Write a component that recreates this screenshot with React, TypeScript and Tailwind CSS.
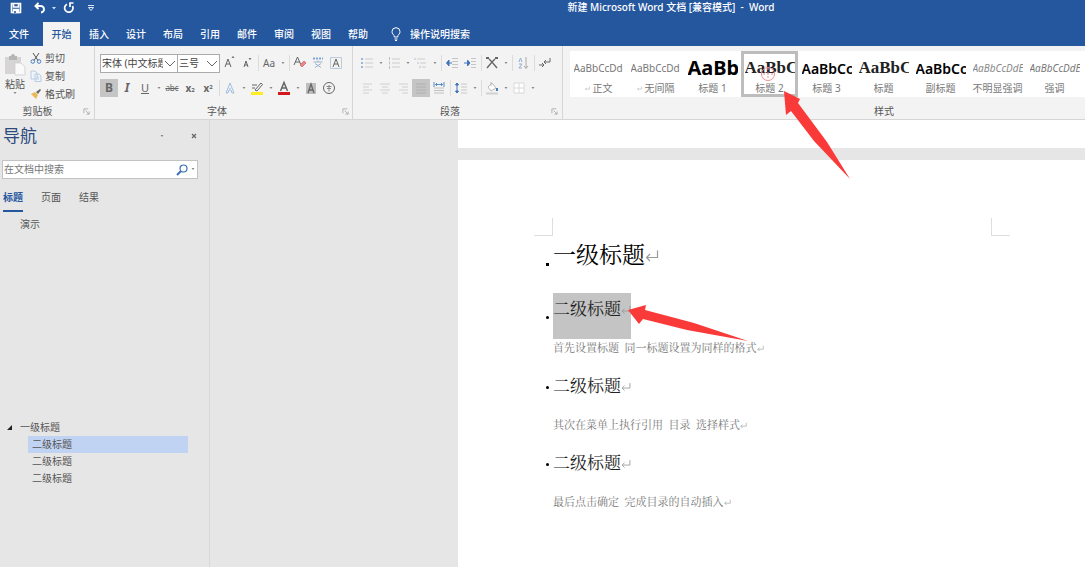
import type { ReactNode } from 'react';

const MENU = ['插入', '设计', '布局', '引用', '邮件', '审阅', '视图', '帮助'];

const STYLES = [
    { name: '正文', mark: true, sample: 'AaBbCcDd', look: 'text-[10px] text-[#777]' },
    { name: '无间隔', mark: true, sample: 'AaBbCcDd', look: 'text-[10px] text-[#777]' },
    { name: '标题 1', sample: 'AaBb', look: 'text-[20px] font-bold text-black' },
    { name: '标题 2', sample: 'AaBbC', look: "text-[17px] font-bold text-[#222] font-['Liberation_Serif',serif]", active: true },
    { name: '标题 3', sample: 'AaBbCc', look: 'text-[14px] font-semibold text-black' },
    { name: '标题', sample: 'AaBbC', look: "text-[17px] font-bold text-[#222] font-['Liberation_Serif',serif]" },
    { name: '副标题', sample: 'AaBbCc', look: 'text-[14px] font-semibold text-black' },
    { name: '不明显强调', sample: 'AaBbCcDdE', look: 'text-[10px] italic text-[#888]' },
    { name: '强调', sample: 'AaBbCcDdE', look: 'text-[10px] italic text-[#777]' },
];

// Words are separated by half-width (en) spaces, as in the document font
const SECTIONS = [
    { title: '二级标题', text: '首先设置标题\u2002同一标题设置为同样的格式', selected: true },
    { title: '二级标题', text: '其次在菜单上执行引用\u2002目录\u2002选择样式' },
    { title: '二级标题', text: '最后点击确定\u2002完成目录的自动插入' },
];

function Tool({ label, active, children }: { label: string; active?: boolean; children: ReactNode }) {
    return (
        <button aria-label={label} className={`flex h-[18px] w-[18px] shrink-0 items-center justify-center text-[#666] ${active ? 'bg-[#c5c5c5]' : ''}`}>
            {children}
        </button>
    );
}

function Svg({ children }: { children: ReactNode }) {
    return (
        <svg viewBox="0 0 16 16" className="h-4 w-4" fill="none" stroke="currentColor" strokeWidth="1">
            {children}
        </svg>
    );
}

function Caret() {
    return (
        <span className="flex w-[9px] shrink-0 items-center justify-center">
            <svg viewBox="0 0 4 3" className="h-[3px] w-1" fill="#888"><path d="M.5 0h3L2 2z" /></svg>
        </span>
    );
}

function Sep() {
    return (
        <span className="flex w-1 shrink-0 justify-center">
            <span className="h-4 w-px bg-[#dcdcdc]" />
        </span>
    );
}

function Launcher() {
    return (
        <svg viewBox="0 0 8 8" className="h-[7px] w-[7px]" fill="none" stroke="#aaa"><path d="M1 6V1h5M3 3l4 4M7 4v3H4" /></svg>
    );
}

function Group({ title, className, children }: { title: string; className: string; children: ReactNode }) {
    return (
        <section className={`relative flex flex-col justify-between pt-2 ${className}`}>
            {children}
            <div className="flex h-[15px] items-center justify-center text-[10px] text-[#555]">{title}</div>
        </section>
    );
}

function Picker({ label, value, className }: { label: string; value: string; className: string }) {
    return (
        <span className={`relative h-[19px] shrink-0 border border-[#ababab] bg-white ${className}`}>
            <select aria-label={label} className="block h-full w-full appearance-none pl-px text-[10px] text-[#444] outline-none">
                <option>{value}</option>
            </select>
            <svg viewBox="0 0 14 17" className="pointer-events-none absolute top-0 right-0 h-[17px] w-[14px] bg-white" fill="none" stroke="#666"><path d="M2 6l5 5 5-5" /></svg>
        </span>
    );
}

function Return({ className }: { className: string }) {
    return (
        <svg viewBox="0 0 14 14" className={className} fill="none" stroke="#999" strokeWidth="1.200"><path d="M12.500 1.500V8.500H1.500M5 5L1.500 8.500 5 12" /></svg>
    );
}

function Header() {
    return (
        <header className="bg-[#25579e] text-[10px] text-white">
            <div className="relative flex h-[22px] items-start pt-[2px] pl-[10px]">
                <button aria-label="保存" className="flex w-3 justify-center">
                    <svg viewBox="0 0 12 12" className="h-3 w-3" fill="none" stroke="white" strokeWidth="1.600"><path d="M1.500 1.500h9v9h-9zM3.500 1.500v3.500h5V1.500" /><path d="M3.500 7.500h5v3h-5z" fill="white" /><path d="M5 9v2" stroke="#25579e" /></svg>
                </button>
                <button aria-label="撤消" className="ml-3 flex items-center">
                    <svg viewBox="0 0 12 12" className="h-3 w-3" fill="none" stroke="white" strokeWidth="1.900"><path d="M4.500 1L1.500 4l3 3M2 4h4.500a3.200 3.200 0 0 1 .5 6.500" /></svg>
                    <svg viewBox="0 0 4 3" className="ml-[6px] h-[3px] w-1" fill="#cfe0f5"><path d="M0 0h4L2 2.500z" /></svg>
                </button>
                <button aria-label="重复" className="ml-[7px]">
                    <svg viewBox="0 0 12 12" className="h-3 w-3" fill="none" stroke="white" strokeWidth="1.700"><path d="M4 2.200A4.200 4.200 0 1 0 9.500 4" /><path d="M10.500 1H7v4" /></svg>
                </button>
                <button aria-label="自定义快速访问工具栏" className="mt-[3px] ml-3">
                    <svg viewBox="0 0 8 7" className="h-[7px] w-2" fill="none" stroke="#dbe6f5"><path d="M1 .5h6M1.500 2.500h5L4 5.500z" /></svg>
                </button>
                <h1 className="absolute inset-x-0 top-0 pl-[257px] text-center text-[10px] leading-[15px] font-medium">新建 Microsoft Word 文档 [兼容模式] &nbsp;-&nbsp; Word</h1>
            </div>
            <nav className="flex h-6 items-stretch font-medium">
                <button className="w-[43px] pr-[5px]">文件</button>
                <button className="w-[37px] bg-[#f3f3f3] text-[#25579e]">开始</button>
                <div className="flex pl-[9px]">
                    {MENU.map((m) => <button key={m} className="mr-[17px] w-5 whitespace-nowrap">{m}</button>)}
                </div>
                <button className="ml-[6px] flex items-center gap-[9px]">
                    <svg viewBox="0 0 10 14" className="h-[14px] w-[10px]" fill="none" stroke="white"><path d="M3.200 10V8.500C2 7.500 1 6.500 1 4.700a4 4 0 0 1 8 0C9 6.500 8 7.500 6.800 8.500V10zM3.500 12h3M4 13.500h2" /></svg>
                    操作说明搜索
                </button>
            </nav>
        </header>
    );
}

function Clipboard() {
    return (
        <Group title="剪贴板" className="w-[94px] pr-[19px]">
            <div className="flex text-[10px] leading-[18px] text-[#555]">
                <button className="flex w-[38px] flex-col items-center">
                    <svg viewBox="0 0 22 22" className="h-[22px] w-[22px]"><path d="M1 3h16v17H1z" fill="#d6d4d4" /><path d="M5 2h2a2 2 0 0 1 4 0h2v4H5z" fill="#b5b5b5" /><path d="M11 9h6l4 4v8H11z" fill="#fafafa" stroke="#d5d5d5" /></svg>
                    <span className="leading-4">粘贴</span>
                    <Caret />
                </button>
                <div className="-mt-[5px] flex flex-col whitespace-nowrap">
                    <button className="flex items-center gap-[3px]">
                        <svg viewBox="0 0 12 12" className="h-3 w-3" fill="none" stroke="#555"><path d="M3 1l5 7.500M9 1L4 8.500" /><g stroke="#4a7ebb"><circle cx="2.800" cy="9.500" r="1.800" /><circle cx="9" cy="9.500" r="1.800" /></g></svg>
                        剪切
                    </button>
                    <button className="flex items-center gap-[3px]">
                        <svg viewBox="0 0 12 12" className="h-3 w-3" fill="#eef4fb" stroke="#b9cce2"><path d="M1 1h4l2 2v6H1zM5 4h4l2 2v5.500H5zM7 7h2M7 9h2" /></svg>
                        复制
                    </button>
                    <button className="flex items-center gap-[3px]">
                        <svg viewBox="0 0 12 12" className="h-3 w-3"><path d="M1 6l4-2 3 3-2 4z" fill="#edb85a" /><path d="M6 4l4-3 1 1-3 4z" fill="#666" /></svg>
                        格式刷
                    </button>
                </div>
            </div>
            <span className="absolute right-1 bottom-1"><Launcher /></span>
        </Group>
    );
}

function FontGroup() {
    return (
        <Group title="字体" className="w-[258px] border-l border-[#d5d5d5] pr-[18px] pl-[5px]">
            <div className="flex flex-col gap-[7px]">
                <div className="flex h-[18px] items-center">
                    <Picker label="字体" value="宋体 (中文标题" className="w-[78px]" />
                    <Picker label="字号" value="三号" className="-ml-px w-[43px]" />
                    <Tool label="增大字号"><Svg><path d="M4 12l3-8 3 8M5 9h4M11 3l1-1.500L13 3" /></Svg></Tool>
                    <Tool label="减小字号"><Svg><path d="M5 12l2-6 2 6M5.500 10h3M10 3l1 1.500L12 3" /></Svg></Tool>
                    <Sep />
                    <Tool label="更改大小写"><span className="text-[10px]">Aa</span></Tool>
                    <Caret />
                    <Sep />
                    <Tool label="清除格式"><Svg><path d="M2 10l3.500-8L9 10M3 7h5" /><path d="M8 10l4-4 2 2-4 4z" fill="#e58a8a" stroke="#d77" /></Svg></Tool>
                    <Tool label="拼音指南"><Svg><path d="M3 3.500h10" stroke="#7da6da" strokeDasharray="2 1" strokeWidth="2" /><path d="M3.500 7h9M8 5.500V7M5 8.500l6 4M11 8.500l-6 4" stroke="#9bb3d2" /></Svg></Tool>
                    <Tool label="字符边框"><Svg><path d="M2.500 2.500h11v11h-11z" stroke="#bccbdc" /><path d="M5 12l3-8 3 8M6 9h4" /></Svg></Tool>
                </div>
                <div className="flex h-[18px] items-center">
                    <Tool label="加粗" active><span className="text-xs font-bold">B</span></Tool>
                    <Tool label="倾斜"><span className="text-xs font-bold italic">I</span></Tool>
                    <Tool label="下划线"><span className="text-[11px] underline">U</span></Tool>
                    <Caret />
                    <Tool label="删除线"><span className="text-[8px] line-through">abc</span></Tool>
                    <Tool label="下标"><span className="text-[10px] font-bold">x<span className="text-[6px]">2</span></span></Tool>
                    <Tool label="上标"><span className="text-[10px] font-bold">x<sup className="text-[6px]">2</sup></span></Tool>
                    <Sep />
                    <Tool label="文本效果"><Svg><path d="M4 13L8 3l4 10h-2l-1-3H7l-1 3zM7.300 8.500h1.400" stroke="#9fc0e4" /></Svg></Tool>
                    <Caret />
                    <Tool label="突出显示"><Svg><path d="M2 12h12v3H2z" fill="#ffed20" stroke="none" /><path d="M6 10l6-7 1.500 1.500L8 11zM3 5h5M3 8h3" /></Svg></Tool>
                    <Caret />
                    <Tool label="字体颜色"><Svg><path d="M2 12h12v3H2z" fill="#d4171d" stroke="none" /><path d="M4.500 11L8 2.500l3.500 8.500M5.500 8h5" strokeWidth="1.500" /></Svg></Tool>
                    <Caret />
                    <Tool label="字符底纹"><Svg><path d="M3 3h10v11H3z" fill="#bdbdbd" stroke="none" /><path d="M5 13l3-9 3 9M6 10h4" strokeWidth="1.300" /></Svg></Tool>
                    <Tool label="带圈字符"><Svg><circle cx="8" cy="8" r="5.500" /><path d="M5.500 6.500h5M8 5v6.500M6 8.500h4" stroke="#888" /></Svg></Tool>
                </div>
            </div>
            <span className="absolute right-[3px] bottom-1"><Launcher /></span>
        </Group>
    );
}

function ParagraphGroup() {
    return (
        <Group title="段落" className="w-[210px] border-l border-[#d5d5d5] pr-5 pl-[5px]">
            <div className="flex flex-col gap-[7px]">
                <div className="flex h-[18px] items-center">
                    <Tool label="项目符号"><Svg><path d="M6 4h8M6 8h8M6 12h8" stroke="#ccc" /><path d="M2 4h2M2 8h2M2 12h2" stroke="#9ab6d8" strokeWidth="2" /></Svg></Tool>
                    <Caret />
                    <Tool label="编号"><Svg><path d="M6 4h8M6 8h8M6 12h8" stroke="#ccc" /><path d="M3.500 2v3M3.500 6.500v3M3.500 11v3" stroke="#bbc" /></Svg></Tool>
                    <Caret />
                    <Tool label="多级列表"><Svg><path d="M4 4h8M7 8h6M9 12h4" stroke="#ccc" /><path d="M1 4h2M4 8h2M6 12h2" stroke="#aac2de" /></Svg></Tool>
                    <Caret />
                    <Sep />
                    <Tool label="减少缩进量"><Svg><path d="M8 3.500h6M8 6.500h6M8 9.500h6M8 12.500h6" stroke="#c5c5c5" /><path d="M8 8H3M5 5L2.500 8 5 11z" fill="#3f74b8" stroke="#3f74b8" /></Svg></Tool>
                    <Tool label="增加缩进量"><Svg><path d="M9 3.500h5M9 6.500h5M9 9.500h5M9 12.500h5" stroke="#c5c5c5" /><path d="M2 8h5M5.500 5L8 8l-2.500 3z" fill="#3f74b8" stroke="#3f74b8" /></Svg></Tool>
                    <Sep />
                    <Tool label="中文版式"><Svg><path d="M3 13l5-6 5 6M5 4l3 3 3-3" strokeWidth="1.400" /><path d="M2 3h3M11 3h3" strokeWidth="2" /></Svg></Tool>
                    <Caret />
                    <Sep />
                    <Tool label="排序"><Svg><path d="M4 7l1.500-4L7 7M4 9h3l-3 4h3" stroke="#8fadd3" /><path d="M11 2v11M9 11l2 2.500 2-2.500" stroke="#aaa" /></Svg></Tool>
                    <Sep />
                    <Tool label="显示编辑标记"><Svg><path d="M13 3v4H7M9 5L7 7l2 2M2 10h5M5 8l2 2-2 2" /></Svg></Tool>
                </div>
                <div className="flex h-[18px] items-center">
                    <Tool label="左对齐"><Svg><path d="M4 4h9M4 7h6M4 10h9M4 13h6" stroke="#d0d0d0" /></Svg></Tool>
                    <Tool label="居中"><Svg><path d="M3 4h10M5 7h6M3 10h10M5 13h6" stroke="#d0d0d0" /></Svg></Tool>
                    <Tool label="右对齐"><Svg><path d="M4 4h9M7 7h6M4 10h9M7 13h6" stroke="#d0d0d0" /></Svg></Tool>
                    <Tool label="两端对齐" active><Svg><path d="M3 4h10M3 7h10M3 10h10M3 13h10" stroke="#b0b0b0" /></Svg></Tool>
                    <Tool label="分散对齐"><Svg><path d="M3 8h10M3 10.500h10M3 13h10" stroke="#c0c0c0" /><path d="M3 2v5M13 2v5M4 4.500h8M6 3L4.500 4.500 6 6M10 3l1.500 1.500L10 6" stroke="#5b8bc4" /></Svg></Tool>
                    <Sep />
                    <Tool label="行距"><Svg><path d="M8 4h6M8 7h6M8 10h6M8 13h6" stroke="#cacaca" /><path d="M4 3v10M2.500 5L4 3l1.500 2zM2.500 11L4 13l1.500-2z" fill="#3f74b8" stroke="#3f74b8" /></Svg></Tool>
                    <Caret />
                    <Sep />
                    <Tool label="底纹"><Svg><path d="M2 13.500h12" stroke="#d0d0d0" strokeWidth="2" /><path d="M4 7l4-4 4 5-5 3zM7 2v4" stroke="#bbb" fill="white" /><path d="M13 8v3" stroke="#4b7dbd" strokeWidth="2" /></Svg></Tool>
                    <Caret />
                    <Tool label="边框"><Svg><path d="M3 3h10v10H3zM8 3v10M3 8h10" stroke="#d8d8d8" fill="white" /></Svg></Tool>
                    <Caret />
                </div>
            </div>
            <span className="absolute right-1 bottom-1"><Launcher /></span>
        </Group>
    );
}

function StylesGroup() {
    return (
        <section className="flex min-w-0 flex-1 flex-col justify-between overflow-hidden border-l border-[#d5d5d5] pt-[5px] pl-[7px]">
            <div className="flex h-[46px] bg-white">
                {STYLES.map((s) => (
                    <button key={s.name} className={`flex w-[57px] shrink-0 flex-col items-center whitespace-nowrap ${s.active ? 'relative outline-3 -outline-offset-3 outline-[#bdbdbd]' : ''}`}>
                        <span className={`flex h-[30px] w-[50px] items-center overflow-hidden pt-1 ${s.look}`}>{s.sample}</span>
                        <span className="flex items-center gap-[3px] text-[10px] leading-[14px] text-[#777]">
                            {s.mark && <Return className="h-[5px] w-[5px]" />}
                            {s.name}
                        </span>
                        {s.active && (
                            <svg viewBox="0 0 16 16" className="absolute top-[15px] left-[19px] h-4 w-4" fill="none" stroke="#ef8d8d"><circle cx="8" cy="8" r="6.500" /><path d="M8 2v12M3 8h10" strokeDasharray="2 2" /></svg>
                        )}
                    </button>
                ))}
            </div>
            <div className="flex h-[15px] items-center justify-center pl-[113px] text-[10px] text-[#555]">样式</div>
        </section>
    );
}

function Navigation() {
    return (
        <aside className="w-[210px] shrink-0 border-r border-[#d8d8d8] text-[10px] text-[#555]">
            <div className="flex h-10 items-center pb-2 pl-[3px]">
                <h2 className="flex-1 text-[17px] text-[#2b4a7d]">导航</h2>
                <Caret />
                <button aria-label="关闭" className="mr-[11px] ml-6 flex w-2 justify-center">
                    <svg viewBox="0 0 6 6" className="h-[6px] w-[6px]" stroke="#666" strokeWidth="1.200"><path d="M1 1l4 4M5 1L1 5" /></svg>
                </button>
            </div>
            <div className="mr-[11px] ml-[2px] flex h-[19px] items-center border border-[#c3c3c3] bg-white">
                <input aria-label="在文档中搜索" placeholder="在文档中搜索" className="min-w-0 flex-1 pl-px outline-none placeholder:text-[#777]" />
                <svg viewBox="0 0 12 12" className="h-3 w-3" fill="none" stroke="#3c70b0" strokeWidth="1.200"><circle cx="7.500" cy="4.500" r="3.500" /><path d="M5 7L1 11" strokeWidth="2" /></svg>
                <Caret />
            </div>
            <div className="mt-[10px] flex gap-[18px] pl-[3px]">
                <button className="h-[23px] w-5 border-b-2 border-[#25579e] pb-1 font-bold whitespace-nowrap text-[#25579e]">标题</button>
                <button className="h-[23px] w-5 pb-[6px] whitespace-nowrap">页面</button>
                <button className="h-[23px] w-5 pb-[6px] whitespace-nowrap">结果</button>
            </div>
            <div className="mt-1 pl-5 leading-[17px]">演示</div>
            <ul className="mt-[186px] mr-[21px] leading-[17px]">
                <li className="flex items-center pl-[7px]">
                    <svg viewBox="0 0 5 5" className="mr-2 h-[5px] w-[5px]"><path d="M5 0v5H0z" fill="#222" /></svg>
                    一级标题
                </li>
                {SECTIONS.map((s, i) => (
                    <li key={i} className={`ml-7 pl-1 ${s.selected ? 'bg-[#c1d3f3]' : ''}`}>{s.title}</li>
                ))}
            </ul>
        </aside>
    );
}

function Document() {
    return (
        <main className="flex min-w-0 flex-1 flex-col gap-3 pl-[248px]">
            <div className="h-7 shrink-0 bg-white" />
            <article className="flex-1 bg-white pt-[58px] pb-8 pl-[76px] font-['Liberation_Serif','Noto_Serif_CJK_SC','Noto_Sans_CJK_SC',serif]">
                <div className="flex h-[18px] w-[476px] justify-between">
                    <span className="w-[19px] border-r border-b border-[#dedede]" />
                    <span className="w-[19px] border-b border-l border-[#dedede]" />
                </div>
                <div className="mb-[17px] flex h-10 items-center">
                    <span className="mt-4 mr-1 ml-3 h-[3px] w-[3px] bg-black" />
                    <h1 className="text-[23px] text-black">一级标题</h1>
                    <Return className="h-[14px] w-[14px]" />
                </div>
                {SECTIONS.map((s, i) => (
                    <section key={i} className="mb-[13px]">
                        <div className="flex items-start">
                            <span className={`mr-1 ml-3 h-[3px] w-[3px] rounded-full bg-black ${s.selected ? 'mt-[23px]' : 'mt-4'}`} />
                            <div className={`flex h-[46px] pb-3 ${s.selected ? 'bg-[#c4c4c4]' : ''}`}>
                                <h2 className="text-[17px] leading-[34px] text-[#222]">{s.title}</h2>
                                <Return className="mt-3 h-[10px] w-[10px]" />
                            </div>
                        </div>
                        <p className="flex items-center pl-[19px] text-[11px] leading-[18px] text-[#777]">
                            {s.text}
                            <Return className="h-[7px] w-[7px]" />
                        </p>
                    </section>
                ))}
            </article>
        </main>
    );
}

export default function App() {
    return (
        <div className="relative flex min-h-screen flex-col overflow-hidden bg-[#e6e6e6] font-['Noto_Sans','Noto_Sans_CJK_SC',sans-serif]">
            <Header />
            <div className="flex h-[74px] border-b border-[#d5d5d5] bg-[#f3f3f3]">
                <Clipboard />
                <FontGroup />
                <ParagraphGroup />
                <StylesGroup />
            </div>
            <div className="flex flex-1">
                <Navigation />
                <Document />
            </div>

            {/* Callout arrows over the document */}
            <svg viewBox="0 0 68 90" className="pointer-events-none absolute top-[90px] left-[783px] h-[90px] w-[68px]" fill="#fa3a38"><path d="M1 1L17 9l-2 4L44 52 67 89 31 51 8 21l-5 4z" /></svg>
            <svg viewBox="0 0 124 40" className="pointer-events-none absolute top-[303px] left-[627px] h-10 w-[124px]" fill="#fa3a38"><path d="M1 7L19 2l-1 5 49 13 54 18-61-11-44-11-4 5z" /></svg>
        </div>
    );
}
